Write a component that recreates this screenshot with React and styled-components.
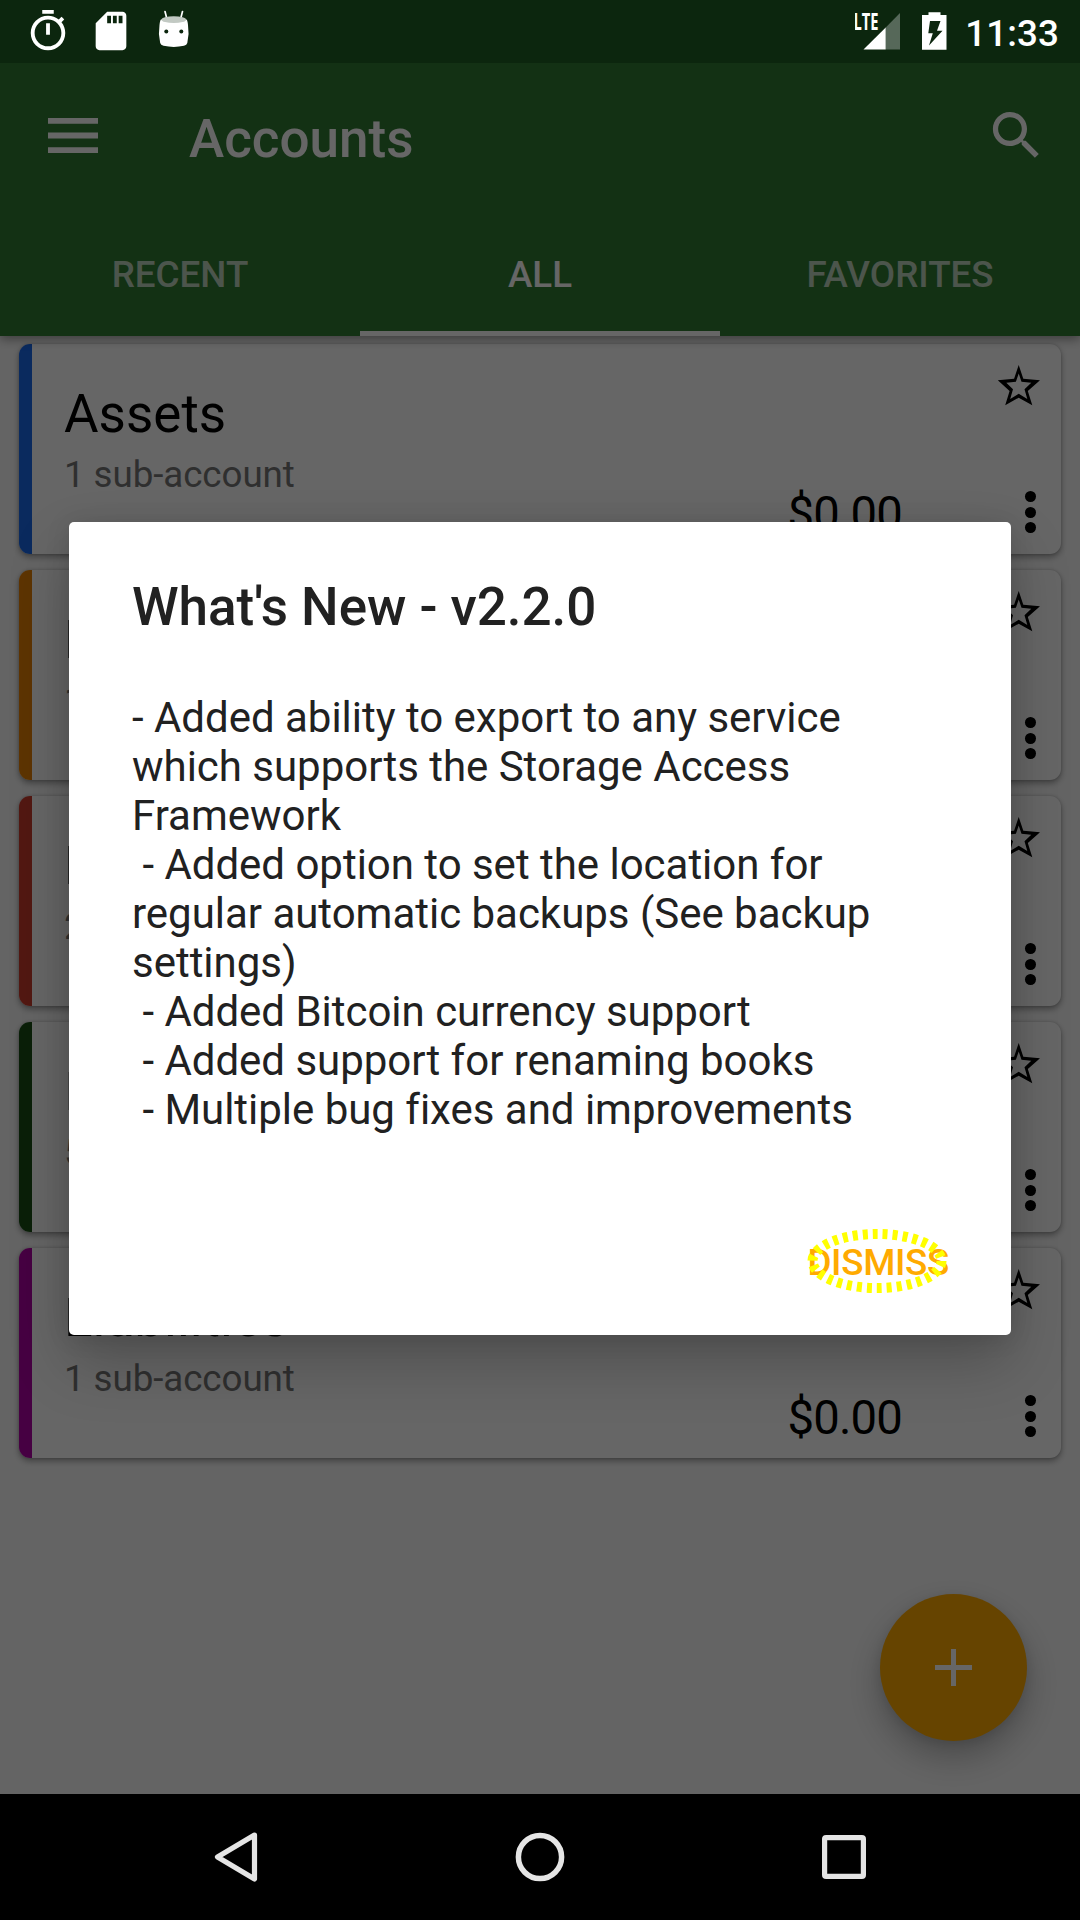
import React from 'react';
import styled, { createGlobalStyle } from 'styled-components';

const Global = createGlobalStyle`
  * { box-sizing: border-box; }
  body { margin: 0; font-family: Roboto, "Noto Sans", sans-serif; }
`;

const Screen = styled.div`
  position: relative;
  width: 1080px;
  height: 1920px;
  display: flex;
  flex-direction: column;
  overflow: hidden;
  background: #fafafa;
`;

const StatusBar = styled.header`
  height: 63px;
  flex: none;
  display: flex;
  justify-content: space-between;
  background: #0c260e;
  position: relative;
  z-index: 3;
`;

const StatusIcons = styled.div`
  display: flex;
  align-items: center;
  gap: 17px;
  padding: 0 0 1px 25px;
`;

const StatusInfo = styled.div`
  display: flex;
  gap: 17px;
  padding-right: 21px;
`;

const Clock = styled.time`
  font-size: 36.75px;
  font-weight: 500;
  line-height: 43px;
  margin-top: 12px;
  letter-spacing: 0.1px;
  color: #fff;
`;

const AppBar = styled.div`
  height: 273px;
  flex: none;
  display: flex;
  flex-direction: column;
  background: #307a33;
  color: #fff;
  box-shadow: 0 3px 10px rgba(0, 0, 0, 0.4);
  position: relative;
`;

const Toolbar = styled.div`
  height: 147px;
  display: flex;
  align-items: center;
  padding: 0 32px 2px 48px;
  gap: 91px;
`;

const PageTitle = styled.h1`
  flex: 1;
  margin: 6px 0 0;
  font-size: 53px;
  line-height: 62px;
  font-weight: 500;
`;

const Tabs = styled.nav`
  flex: 1;
  display: grid;
  grid-template-columns: repeat(3, 1fr);
`;

const Tab = styled.div`
  padding-top: 43px;
  text-align: center;
  font-size: 36.75px;
  line-height: 43px;
  font-weight: 500;
  color: ${(p) => (p.$active ? '#fff' : 'rgba(255,255,255,0.7)')};
  border-bottom: 5px solid ${(p) => (p.$active ? '#fff' : 'transparent')};
`;

const List = styled.main`
  flex: 1;
  display: flex;
  flex-direction: column;
  gap: 16px;
  padding: 8px 19px 0;
`;

const Card = styled.article`
  height: 210px;
  display: flex;
  border-radius: 11px;
  overflow: hidden;
  background: #fff;
  box-shadow: 0 3px 6px rgba(0, 0, 0, 0.36), 0 0 3px rgba(0, 0, 0, 0.16);
`;

const Stripe = styled.div`
  width: 13px;
  background: ${(p) => p.$color};
`;

const CardText = styled.div`
  flex: 1;
  padding: 39px 0 0 32px;
`;

const Name = styled.div`
  font-size: 53px;
  line-height: 62px;
  color: #000;
`;

const Sub = styled.div`
  font-size: 36.75px;
  line-height: 43px;
  letter-spacing: -0.08px;
  margin-top: 7.5px;
  color: #767676;
`;

const Balance = styled.div`
  align-self: flex-end;
  font-size: 47.25px;
  line-height: 56px;
  letter-spacing: -0.85px;
  padding: 0 1px 12px 0;
  color: #000;
`;

const CardActions = styled.div`
  width: 158px;
  display: flex;
  flex-direction: column;
  justify-content: space-between;
  align-items: flex-end;
  padding: 20px 20px 21px 0;
`;

const MoreButton = styled.div`
  width: 22px;
  display: flex;
  flex-direction: column;
  align-items: center;
  gap: 4.4px;
`;

const Dot = styled.i`
  width: 11px;
  height: 11px;
  border-radius: 50%;
  background: #000;
`;

const Fab = styled.div`
  position: absolute;
  left: 880px;
  top: 1594px;
  width: 147px;
  height: 147px;
  border-radius: 50%;
  display: flex;
  align-items: center;
  justify-content: center;
  background: #ffaa00;
  box-shadow: 0 16px 34px rgba(0, 0, 0, 0.26), 0 3px 12px rgba(0, 0, 0, 0.1);
`;

const NavBar = styled.footer`
  height: 126px;
  flex: none;
  display: flex;
  align-items: center;
  justify-content: space-between;
  padding: 0 211px;
  background: #000;
  position: relative;
  z-index: 3;
`;

const Scrim = styled.div`
  position: absolute;
  inset: 0;
  z-index: 2;
  background: rgba(0, 0, 0, 0.6);
`;

const Dialog = styled.section`
  position: absolute;
  z-index: 4;
  left: 69px;
  top: 522px;
  width: 942px;
  height: 813px;
  display: flex;
  flex-direction: column;
  padding: 54px 62px 51px 63px;
  border-radius: 5px;
  background: #fff;
  color: #212121;
  box-shadow: 0 28px 60px rgba(0, 0, 0, 0.22), 0 2px 24px rgba(0, 0, 0, 0.12);
`;

const DialogTitle = styled.h2`
  margin: 0 0 55px;
  font-size: 53px;
  line-height: 62px;
  letter-spacing: -0.05px;
  font-weight: 500;
`;

const Notes = styled.p`
  margin: 0;
  flex: 1;
  font-size: 42px;
  line-height: 49px;
  letter-spacing: -0.02px;
  white-space: pre;
`;

const Dismiss = styled.button`
  position: relative;
  align-self: flex-end;
  padding: 0;
  border: 0;
  background: none;
  font: 500 36.75px/43px Roboto, sans-serif;
  letter-spacing: -0.3px;
  color: #ffaa00;
`;

const Ring = styled.svg`
  position: absolute;
  right: 0.7px;
  top: -14px;
  overflow: visible;
`;

const ACCOUNTS = [
  { name: 'Assets', sub: '1 sub-account', color: '#1969eb' },
  { name: 'Equity', sub: '1 sub-account', color: '#e98306' },
  { name: 'Expenses', sub: '2 sub-accounts', color: '#cc3d2e' },
  { name: 'Income', sub: '5 sub-accounts', color: '#194e16' },
  { name: 'Liabilities', sub: '1 sub-account', color: '#af00a5' },
];

const NOTES = [
  '- Added ability to export to any service',
  'which supports the Storage Access',
  'Framework',
  ' - Added option to set the location for',
  'regular automatic backups (See backup',
  'settings)',
  ' - Added Bitcoin currency support',
  ' - Added support for renaming books',
  ' - Multiple bug fixes and improvements',
].join('\n');

const Timer = () => (
  <svg width="46" height="46" viewBox="0 0 24 24" fill="#fff">
    <path d="M15 1H9v2h6V1zm-4 13h2V8h-2v6zm8.03-6.61l1.42-1.42c-.43-.51-.9-.99-1.41-1.41l-1.42 1.42C16.07 4.74 14.12 4 12 4c-4.97 0-9 4.03-9 9s4.02 9 9 9 9-4.03 9-9c0-2.12-.74-4.07-1.97-5.61zM12 20c-3.87 0-7-3.13-7-7s3.13-7 7-7 7 3.13 7 7-3.13 7-7 7z" />
  </svg>
);

const SdCard = () => (
  <svg width="46" height="46" viewBox="0 0 24 24" fill="#fff">
    <path d="M18 2h-8L4.02 8 4 20c0 1.1.9 2 2 2h12c1.1 0 2-.9 2-2V4c0-1.1-.9-2-2-2zm-6 6h-2V4h2v4zm3 0h-2V4h2v4zm3 0h-2V4h2v4z" />
  </svg>
);

const Robot = () => (
  <svg width="46" height="46" viewBox="0 0 46 46">
    <path d="M14 3.500l1.800 7M31.500 3.500l-1.800 7" stroke="#fff" strokeWidth="1.700" strokeLinecap="round" />
    <path d="M10 11.500H35.500Q36.500 12 37 17Q38.500 26 36.300 35Q35.800 37 33 37.800Q22.800 40 12.500 37.800Q9.800 37 9.200 35Q7 26 8.500 17Q9 12 10 11.500z" fill="#fff" />
    <ellipse cx="22.800" cy="11.700" rx="12.300" ry="3.400" fill="#c2c9c3" />
    <circle cx="15.300" cy="23.500" r="2" fill="#0c260e" />
    <circle cx="30.300" cy="23.500" r="2" fill="#0c260e" />
  </svg>
);

const LteText = styled.text`
  font: 700 22.500px "Open Sans", Roboto, sans-serif;
`;

const Signal = () => (
  <svg width="50" height="63" viewBox="0 0 50 63">
    <path d="M45 13V49.500H30.700V27.500z" fill="#566859" />
    <path d="M30.700 27.500V49.500H8.500z" fill="#fff" />
    <LteText x="-1.500" y="29.500" fill="#fff" textLength="25" lengthAdjust="spacingAndGlyphs">LTE</LteText>
  </svg>
);

const Battery = () => (
  <svg width="26" height="63" viewBox="0 0 26 63">
    <path fillRule="evenodd" fill="#fff" d="M6.500 12.200h12v2.800h6v34.800H0V15h6.500zM8 21L6.300 33.300h4.500L7 45.500L20.500 30.800H15L18.500 21z" />
  </svg>
);

const Star = () => (
  <svg width="44" height="42" viewBox="0 0 44 42">
    <path fillRule="evenodd" d="M21.700 1L26.300 14.800L43 16.300L30.800 27L35.300 41.200L21.700 33.700L8.200 41.200L12.600 27L0.800 16.300L17.100 14.800zM21.700 9.500L18.900 17.700L9.300 18.800L16 25.300L13.200 35L21.700 29.800L30.300 35L27.500 25.300L34.300 18.800L24.500 17.700z" />
  </svg>
);

export default function App() {
  return (
    <>
      <Global />
      <Screen>
        <StatusBar>
          <StatusIcons>
            <Timer />
            <SdCard />
            <Robot />
          </StatusIcons>
          <StatusInfo>
            <Signal />
            <Battery />
            <Clock>11:33</Clock>
          </StatusInfo>
        </StatusBar>
        <AppBar>
          <Toolbar>
            <svg width="50" height="35" viewBox="0 0 50 35" fill="#fff">
              <path d="M0 0h50v5.800H0zM0 14.600h50v5.800H0zM0 29.200h50v5.800H0z" />
            </svg>
            <PageTitle>Accounts</PageTitle>
            <svg width="63" height="63" viewBox="0 0 24 24" fill="#fff">
              <path d="M15.500 14h-.79l-.28-.27C15.410 12.590 16 11.110 16 9.500 16 5.910 13.090 3 9.500 3S3 5.910 3 9.500 5.910 16 9.500 16c1.610 0 3.090-.59 4.230-1.570l.27.28v.79l5 4.990L20.490 19l-4.990-5zm-6 0C7.010 14 5 11.990 5 9.500S7.010 5 9.500 5 14 7.010 14 9.500 11.990 14 9.500 14z" />
            </svg>
          </Toolbar>
          <Tabs>
            <Tab>RECENT</Tab>
            <Tab $active>ALL</Tab>
            <Tab>FAVORITES</Tab>
          </Tabs>
        </AppBar>
        <List>
          {ACCOUNTS.map((a) => (
            <Card key={a.name}>
              <Stripe $color={a.color} />
              <CardText>
                <Name>{a.name}</Name>
                <Sub>{a.sub}</Sub>
              </CardText>
              <Balance>$0.00</Balance>
              <CardActions>
                <Star />
                <MoreButton>
                  <Dot />
                  <Dot />
                  <Dot />
                </MoreButton>
              </CardActions>
            </Card>
          ))}
        </List>
        <Fab>
          <svg width="37" height="37" viewBox="0 0 37 37" fill="#fff">
            <path d="M16 0h5v16h16v5H21v16h-5V21H0v-5h16z" />
          </svg>
        </Fab>
        <NavBar>
          <svg width="50" height="54" viewBox="0 0 50 54">
            <path d="M43.500 5L6.500 27L43.500 49z" fill="none" stroke="#e5e5e5" strokeWidth="5.200" strokeLinejoin="round" />
          </svg>
          <svg width="50" height="54" viewBox="0 0 50 54">
            <circle cx="25" cy="27" r="21.600" fill="none" stroke="#e5e5e5" strokeWidth="5.500" />
          </svg>
          <svg width="50" height="54" viewBox="0 0 50 54">
            <rect x="5.600" y="7.600" width="38.800" height="38.800" rx="1.500" fill="none" stroke="#e5e5e5" strokeWidth="5.200" />
          </svg>
        </NavBar>
        <Scrim />
        <Dialog>
          <DialogTitle>What's New - v2.2.0</DialogTitle>
          <Notes>{NOTES}</Notes>
          <Dismiss>
            DISMISS
            <Ring width="142" height="66" viewBox="0 0 142 66">
              <ellipse cx="71" cy="34" rx="64.500" ry="27" fill="none" stroke="#ff0" strokeWidth="10" strokeDasharray="5 5" />
            </Ring>
          </Dismiss>
        </Dialog>
      </Screen>
    </>
  );
}
